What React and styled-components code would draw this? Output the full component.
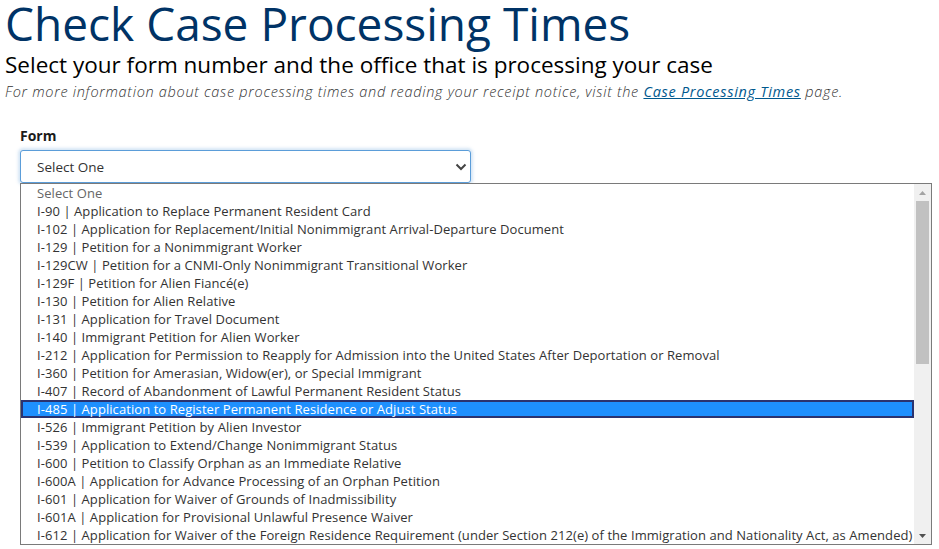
import React from "react";
import styled, { createGlobalStyle } from "styled-components";

const GlobalStyle = createGlobalStyle`
  body {
    margin: 0;
    background: #fff;
    font-family: "Open Sans", "Liberation Sans", sans-serif;
    color: #1b1b1b;
  }
`;

const forms = [
  "I-90 | Application to Replace Permanent Resident Card",
  "I-102 | Application for Replacement/Initial Nonimmigrant Arrival-Departure Document",
  "I-129 | Petition for a Nonimmigrant Worker",
  "I-129CW | Petition for a CNMI-Only Nonimmigrant Transitional Worker",
  "I-129F | Petition for Alien Fiancé(e)",
  "I-130 | Petition for Alien Relative",
  "I-131 | Application for Travel Document",
  "I-140 | Immigrant Petition for Alien Worker",
  "I-212 | Application for Permission to Reapply for Admission into the United States After Deportation or Removal",
  "I-360 | Petition for Amerasian, Widow(er), or Special Immigrant",
  "I-407 | Record of Abandonment of Lawful Permanent Resident Status",
  "I-485 | Application to Register Permanent Residence or Adjust Status",
  "I-526 | Immigrant Petition by Alien Investor",
  "I-539 | Application to Extend/Change Nonimmigrant Status",
  "I-600 | Petition to Classify Orphan as an Immediate Relative",
  "I-600A | Application for Advance Processing of an Orphan Petition",
  "I-601 | Application for Waiver of Grounds of Inadmissibility",
  "I-601A | Application for Provisional Unlawful Presence Waiver",
  "I-612 | Application for Waiver of the Foreign Residence Requirement (under Section 212(e) of the Immigration and Nationality Act, as Amended)",
];

const Page = styled.div`
  padding: 0 5px;
  height: 549px;
  overflow: hidden;
`;

const Title = styled.h1`
  margin: 0;
  padding-bottom: 4px;
  font-size: 46px;
  line-height: 46px;
  font-weight: 400;
  color: #003366;
  white-space: nowrap;
`;

const Subtitle = styled.h2`
  margin: 0;
  font-size: 22.5px;
  line-height: 30px;
  font-weight: 400;
  color: #000;
  white-space: nowrap;
`;

const Note = styled.p`
  margin: 0;
  font-size: 14.5px;
  line-height: 24px;
  font-style: italic;
  font-weight: 300;
  letter-spacing: 0.7px;
  color: #333;
  white-space: nowrap;
`;

const Link = styled.a`
  color: #00598e;
  text-decoration: underline;
  font-weight: 400;
`;

const Field = styled.div`
  margin: 22px 0 0 15px;
`;

const Label = styled.div`
  font-size: 14px;
  font-weight: 700;
  line-height: 20px;
  color: #1b1b1b;
`;

const SelectBox = styled.div`
  margin-top: 4px;
  width: 451px;
  height: 33px;
  box-sizing: border-box;
  border: 1px solid #5b9dd9;
  border-radius: 3px;
  box-shadow: 0 0 3px 2px rgba(91, 157, 217, 0.25);
  display: flex;
  align-items: center;
  justify-content: space-between;
  padding: 0 3px 0 16px;
  font-size: 13.5px;
  color: #333;
  background: #fff;
`;

const ListBox = styled.div`
  width: 912px;
  height: 362px;
  box-sizing: border-box;
  border: 1px solid #7a7a7a;
  display: flex;
  background: #fff;
`;

const Options = styled.div`
  flex: 1;
  overflow: hidden;
`;

const Option = styled.div`
  height: 18px;
  box-sizing: border-box;
  font-size: 13px;
  letter-spacing: 0.07px;
  white-space: nowrap;
  color: ${(p) => (p.$selected ? "#fff" : p.$placeholder ? "#666" : "#333")};
  background: ${(p) => (p.$selected ? "#1e90ff" : "transparent")};
  border: ${(p) => (p.$selected ? "2px solid #2b3370" : "none")};
  line-height: ${(p) => (p.$selected ? "14px" : "18px")};
  padding-left: ${(p) => (p.$selected ? "14px" : "16px")};
`;

const Scrollbar = styled.div`
  width: 17px;
  background: #f0f0f0;
  display: flex;
  flex-direction: column;
  align-items: center;
`;

const Arrow = styled.div`
  height: 17px;
  display: flex;
  align-items: center;
  justify-content: center;
`;

const Thumb = styled.div`
  width: 13px;
  height: 163px;
  background: #c1c1c1;
`;

const Track = styled.div`
  flex: 1;
`;

export default function App() {
  return (
    <Page>
      <GlobalStyle />
      <Title>Check Case Processing Times</Title>
      <Subtitle>Select your form number and the office that is processing your case</Subtitle>
      <Note>
        For more information about case processing times and reading your receipt notice, visit the{" "}
        <Link href="#">Case Processing Times</Link> page.
      </Note>
      <Field>
        <Label>Form</Label>
        <SelectBox>
          <span>Select One</span>
          <svg width="12" height="8" viewBox="0 0 12 8">
            <path d="M1.5 1.5 L6 6 L10.5 1.5" fill="none" stroke="#444" strokeWidth="2" />
          </svg>
        </SelectBox>
        <ListBox>
          <Options>
            <Option $placeholder>Select One</Option>
            {forms.map((f) => (
              <Option key={f} $selected={f.startsWith("I-485")}>
                {f}
              </Option>
            ))}
          </Options>
          <Scrollbar>
            <Arrow>
              <svg width="7" height="4" viewBox="0 0 7 4">
                <path d="M0 4 L3.5 0 L7 4 Z" fill="#a3a3a3" />
              </svg>
            </Arrow>
            <Thumb />
            <Track />
            <Arrow>
              <svg width="7" height="4" viewBox="0 0 7 4">
                <path d="M0 0 L3.5 4 L7 0 Z" fill="#505050" />
              </svg>
            </Arrow>
          </Scrollbar>
        </ListBox>
      </Field>
    </Page>
  );
}
